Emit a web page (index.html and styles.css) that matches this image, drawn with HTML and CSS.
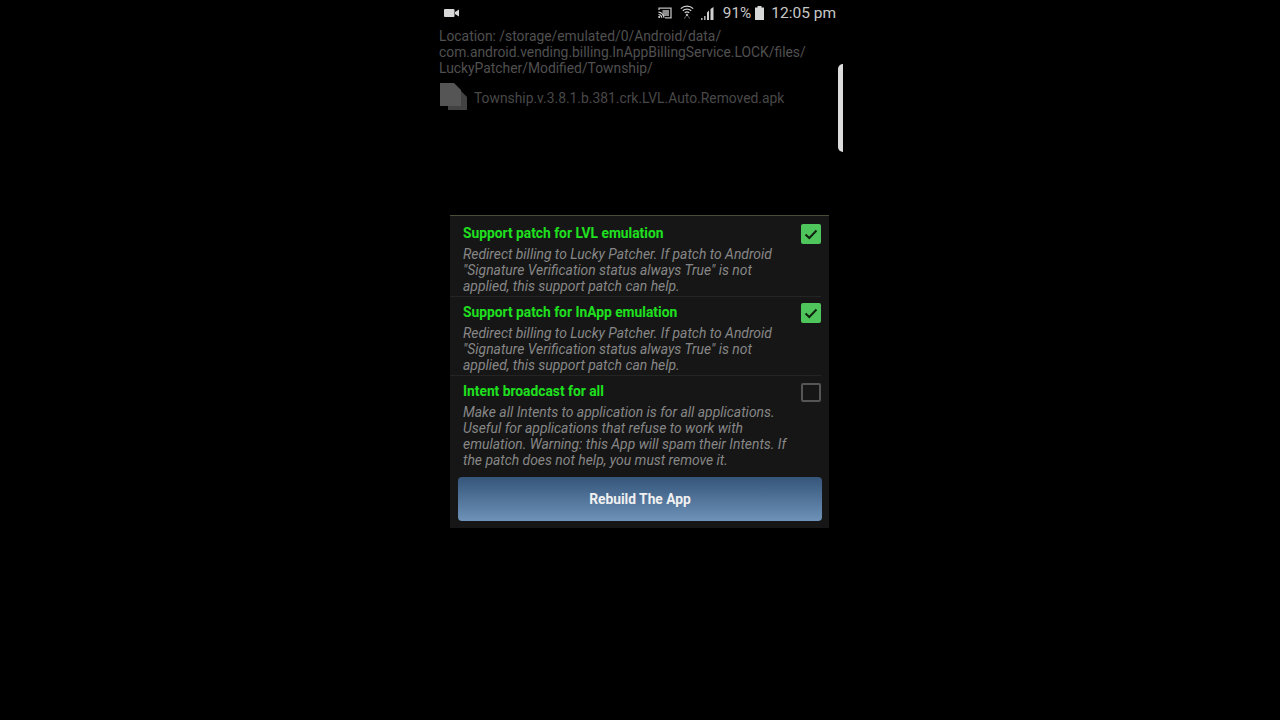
FILE: index.html
```html
<!DOCTYPE html>
<html lang="en">
<head>
<meta charset="utf-8">
<title>Lucky Patcher</title>
<link rel="stylesheet" href="styles.css">
</head>
<body>
<div class="phone">
  <div class="status">
    <svg class="ic-video" viewBox="0 0 16 10" width="16" height="10"><rect x="0" y="1" width="10.5" height="8" rx="1" fill="#d8d8d8"/><path d="M11 4 15 1.5V8.500L11 6Z" fill="#d8d8d8"/></svg>
    <div class="status-right">
      <svg class="ic-cast" viewBox="0 0 14 12" width="14" height="12"><path d="M1 3V1.200H13V10.800H7" fill="none" stroke="#bdbdbd" stroke-width="1.300"/><rect x="4.500" y="3" width="6.500" height="6" fill="#8d8d8d"/><path d="M.5 5.200A6 6 0 0 1 6 10.800M.5 7.500A3.500 3.500 0 0 1 3.800 10.800" fill="none" stroke="#d0d0d0" stroke-width="1.200"/><circle cx="1.200" cy="10" r="1.100" fill="#d0d0d0"/></svg>
      <svg class="ic-wifi" viewBox="0 0 14 15" width="14" height="15"><path d="M.8 4.600A9 9 0 0 1 13.200 4.600M2.800 6.800A6.200 6.200 0 0 1 11.200 6.800M4.800 8.800A3.300 3.300 0 0 1 9.200 8.800" fill="none" stroke="#d0d0d0" stroke-width="1.300"/><path d="M7 9.500 8.400 11 7 12.500 5.600 11Z" fill="#d0d0d0"/><path d="M5.500 12.500 4.500 14.500M8.500 12.500 9.500 14.500" stroke="#777" stroke-width="1"/></svg>
      <svg class="ic-signal" viewBox="0 0 13 13" width="13" height="13"><path d="M0 11H1.600V13H0ZM3 9H4.600V13H3Z" fill="#a8a8a8"/><path d="M6 5.500 8 3.500V13H6ZM9.500 2 12.500 0V13H9.500Z" fill="#d0d0d0"/></svg>
      <span class="pct">91%</span>
      <svg class="ic-batt" viewBox="0 0 9 14" width="9" height="14"><rect x="2.500" y="0" width="4" height="2" fill="#d8d8d8"/><rect x="0" y="1.500" width="9" height="12.500" fill="#d8d8d8"/></svg>
      <span class="clock">12:05 pm</span>
    </div>
  </div>
  <div class="location">Location: /storage/emulated/0/Android/data/<br>com.android.vending.billing.InAppBillingService.LOCK/files/<br>LuckyPatcher/Modified/Township/</div>
  <div class="file">
    <svg class="ic-file" viewBox="0 0 29 28" width="29" height="28"><path d="M9 7H21L28 14V27H9Z" fill="#424242"/><path d="M1 0H15L22 7V23H1Z" fill="#555"/></svg>
    <span class="file-name">Township.v.3.8.1.b.381.crk.LVL.Auto.Removed.apk</span>
  </div>
  <div class="scroll-edge"></div>
  <section class="dialog">
    <div class="item">
      <div class="item-text">
        <div class="title">Support patch for LVL emulation</div>
        <div class="desc">Redirect billing to Lucky Patcher. If patch to Android "Signature Verification status always True" is not applied, this support patch can help.</div>
      </div>
      <span class="box on"><svg viewBox="0 0 20 20" width="20" height="20"><path d="M4.500 10.500 8.300 14 15.500 6.500" fill="none" stroke="#10240f" stroke-width="2"/></svg></span>
    </div>
    <div class="item">
      <div class="item-text">
        <div class="title">Support patch for InApp emulation</div>
        <div class="desc">Redirect billing to Lucky Patcher. If patch to Android "Signature Verification status always True" is not applied, this support patch can help.</div>
      </div>
      <span class="box on"><svg viewBox="0 0 20 20" width="20" height="20"><path d="M4.500 10.500 8.300 14 15.500 6.500" fill="none" stroke="#10240f" stroke-width="2"/></svg></span>
    </div>
    <div class="item last">
      <div class="item-text">
        <div class="title">Intent broadcast for all</div>
        <div class="desc">Make all Intents to application is for all applications. Useful for applications that refuse to work with emulation. Warning: this App will spam their Intents. If the patch does not help, you must remove it.</div>
      </div>
      <span class="box off"></span>
    </div>
    <button class="rebuild">Rebuild The App</button>
  </section>
</div>
</body>
</html>
```
FILE: styles.css
```css
* { box-sizing: border-box; }
html, body { margin: 0; height: 100%; background: #000; overflow: hidden; }
body { font-family: Roboto, "Noto Sans", sans-serif; }
.phone { position: relative; width: 408px; height: 720px; margin: 0 auto; padding: 0 0 0 3px; }
.status { display: flex; align-items: center; justify-content: space-between; height: 26px; padding: 0 8px 0 5px; }
.status-right { display: flex; align-items: center; }
.ic-cast { margin-right: 8px; }
.ic-wifi { margin-right: 7px; margin-top: -3px; }
.ic-signal { margin-right: 9px; }
.pct { font-size: 15.3px; color: #c8c8c8; }
.ic-batt { margin: 0 7px 0 4px; }
.clock { font-size: 15.5px; color: #c8c8c8; }
.location { margin-top: 2px; font-size: 13.85px; line-height: 16px; color: #505050; }
.file { display: flex; align-items: center; margin-top: 7px; height: 28px; font-size: 13.85px; color: #484848; }
.file-name { padding-top: 1px; }
.ic-file { margin-right: 6px; flex: none; }
.scroll-edge { position: absolute; left: 402px; top: 64px; width: 5px; height: 88px; background: #dcdcdc; border-radius: 5px 0 0 5px; }
.dialog { margin: 104px 0 0 11px; width: 379px; height: 313px; background: #161616; border-top: 1px solid #4a4d35; padding: 2px 8px 0 0; }
.item { display: flex; justify-content: space-between; padding: 7px 0 2px 13px; border-bottom: 1px solid #242424; }
.item.last { border-bottom: 0; padding-bottom: 9px; }
.item-text { width: 332px; }
.title { font-size: 13.8px; line-height: 17px; font-weight: 700; color: #1fe01f; }
.desc { margin-top: 4px; font-size: 13.9px; line-height: 16px; font-style: italic; color: #878787; }
.box { flex: none; width: 20px; height: 20px; margin-top: -1px; border-radius: 2px; }
.box.on { background: #4fc65c; }
.box.off { border: 2px solid #555; margin-top: 0; height: 19px; }
.box svg { display: block; }
.rebuild { display: block; width: 364px; height: 44px; margin-left: 8px; border: 0; border-radius: 4px; background: linear-gradient(#35557a, #6e92b8); color: #f0f0f0; font: 700 13.8px Roboto, sans-serif; }
```
